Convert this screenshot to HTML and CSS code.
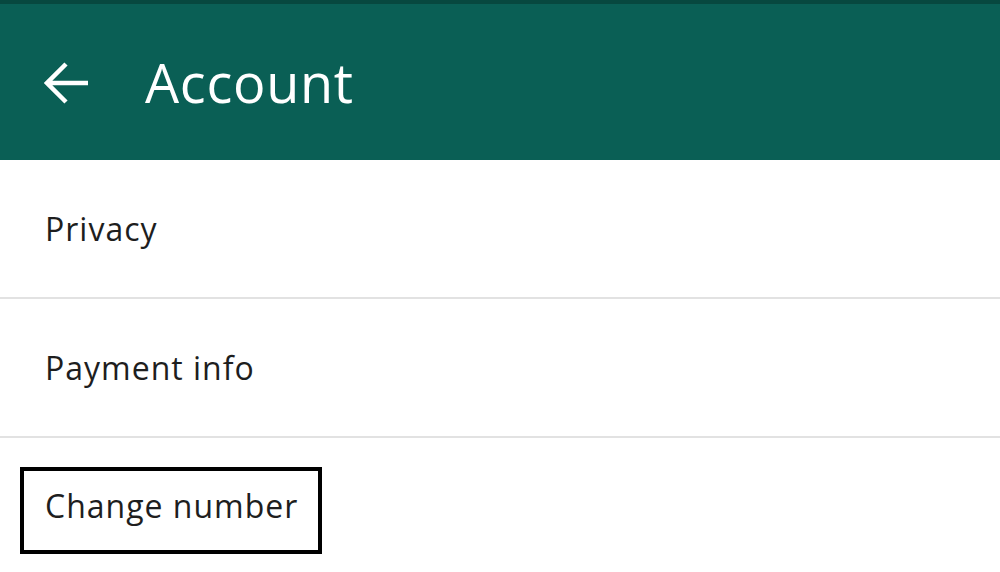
FILE: index.html
```html
<!DOCTYPE html>
<html>
<head>
<meta charset="utf-8">
<link rel="stylesheet" href="styles.css">
</head>
<body>
<div class="status"></div>
<header class="appbar">
  <svg class="back" width="46" height="44" viewBox="0 0 46 44" aria-hidden="true">
    <path d="M44 22 H4 M22 3 L3 22 L22 41" fill="none" stroke="#fff" stroke-width="4.5" stroke-linecap="butt" stroke-linejoin="miter"/>
  </svg>
  <h1 class="title">Account</h1>
</header>
<ul class="list">
  <li class="item">Privacy</li>
  <li class="item">Payment info</li>
  <li class="item"><span class="boxed">Change number</span></li>
</ul>
</body>
</html>
```
FILE: styles.css
```css
html, body {
  margin: 0;
  padding: 0;
  background: #fff;
  font-family: "Open Sans", "Noto Sans", sans-serif;
}
.status {
  height: 4px;
  background: #07483f;
}
.appbar {
  height: 156px;
  background: #0a5f55;
  display: flex;
  align-items: center;
  padding-left: 44px;
  box-sizing: border-box;
}
.back {
  display: block;
  margin-top: 2px;
}
.title {
  margin: 0 0 0 55px;
  color: #fff;
  font-weight: 400;
  font-size: 54px;
  letter-spacing: 0.7px;
  line-height: 1;
}
.list {
  list-style: none;
  margin: 0;
  padding: 0;
}
.item {
  height: 139px;
  display: flex;
  align-items: center;
  padding-left: 45px;
  font-size: 32px;
  letter-spacing: 1px;
  color: #1e1e1e;
  border-bottom: 2px solid #e2e2e2;
  box-sizing: border-box;
}
.item:last-child {
  border-bottom: none;
}
.boxed {
  margin-left: -25px;
  margin-top: 6px;
  line-height: 1;
  padding: 19px 20px 28px 21px;
  border: 4.5px solid #000;
}
```
